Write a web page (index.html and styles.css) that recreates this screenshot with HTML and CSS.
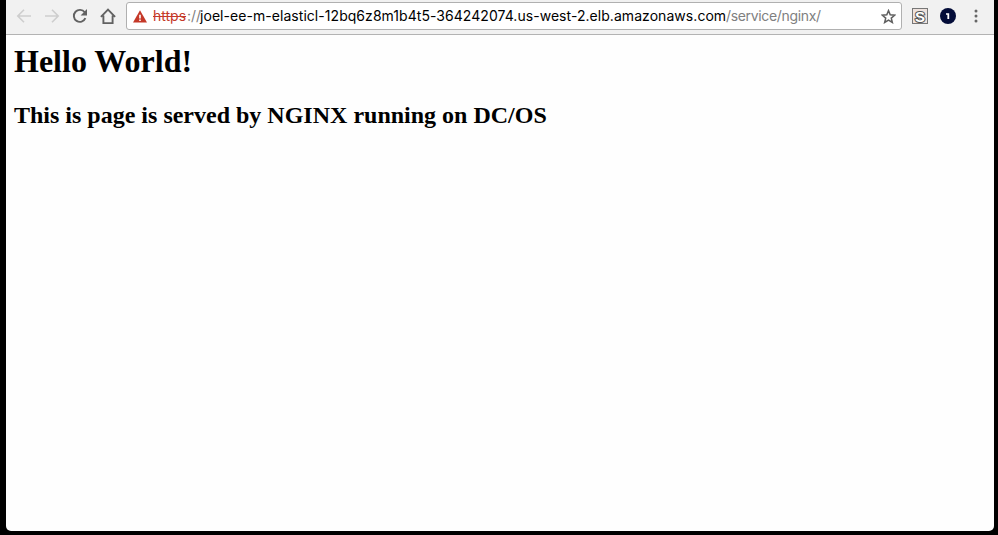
FILE: index.html
```html
<!DOCTYPE html>
<html lang="en">
<head>
<meta charset="utf-8">
<title>Hello World!</title>
<link rel="stylesheet" href="styles.css">
</head>
<body>
<div class="window">
  <header class="toolbar">
    <nav class="nav">
      <svg class="off" viewBox="0 0 16 16"><path d="M15 8H2M8 1.8 1.8 8 8 14.2"/></svg>
      <svg class="off" viewBox="0 0 16 16"><path d="M1 8h13M8 1.8 14.2 8 8 14.2"/></svg>
      <svg viewBox="0 0 16 16"><path class="thick" d="M13.4 10.2A6 6 0 1 1 12.7 4.3"/><path class="solid" d="M15 1v6.4H8.6z"/></svg>
      <svg viewBox="0 0 16 16"><path class="thick" d="M.9 8.8 8 1.7l7.1 7.1M3.4 7.4v7.7h9.2V7.4"/></svg>
    </nav>
    <div class="omnibox">
      <svg class="warning" viewBox="0 0 14 13"><path fill="#c53929" d="M7 .2 14 12.6H0z"/><path fill="#fff" d="M6.2 4.8h1.6v3.6H6.2zM6.2 9.5h1.6v1.6H6.2z"/></svg>
      <div class="url"><span class="scheme">https</span><span class="sep">://</span><span class="host">joel-ee-m-elasticl-12bq6z8m1b4t5-364242074.us-west-2.elb.amazonaws.com</span><span class="path">/service/nginx/</span></div>
      <svg class="star" viewBox="0 0 14 14"><path d="m7 1.5 1.6 3.9 4.2.4-3.2 2.7 1 4.1L7 10.4l-3.6 2.2 1-4.1-3.2-2.7 4.2-.4z"/></svg>
    </div>
    <div class="extensions">
      <span class="stylish">S</span>
      <svg class="badge" viewBox="0 0 16 16"><circle cx="8" cy="8" r="8" fill="#030c38"/><path fill="#fff" d="M6 5.2h3.2V11H7.4V6.8H6z"/></svg>
      <svg class="menu" viewBox="0 0 4 14"><circle cx="2" cy="2" r="1.5"/><circle cx="2" cy="7" r="1.5"/><circle cx="2" cy="12" r="1.5"/></svg>
    </div>
  </header>
  <main>
    <h1>Hello World!</h1>
    <h2>This is page is served by NGINX running on DC/OS</h2>
  </main>
</div>
</body>
</html>
```
FILE: styles.css
```css
* { box-sizing: border-box; }
body {
  margin: 0;
  height: 535px;
  padding: 0 4px 4px 6px;
  background: #000;
  overflow: hidden;
}
.window {
  height: 531px;
  background: #fefefe;
  border-radius: 0 0 5px 5px;
  overflow: hidden;
}
.toolbar {
  display: flex;
  align-items: flex-start;
  height: 35px;
  padding: 2px 12px 0 10px;
  background: #f1f1f1;
  border-bottom: 1px solid #b3b3b3;
}
.nav {
  display: flex;
  gap: 12px;
  padding-top: 6px;
  width: 110px;
}
.nav svg { width: 16px; height: 16px; flex: none; fill: none; stroke: #626262; }
.nav .off { stroke: #cecece; stroke-width: 1.6; }
.nav .thick { stroke-width: 1.9; }
.nav .solid { fill: #626262; stroke: none; }
.omnibox {
  display: flex;
  align-items: center;
  width: 776px;
  height: 28px;
  padding: 0 5px 0 6px;
  background: #fff;
  border: 1px solid #b0b0b0;
  border-radius: 3px;
}
.warning { width: 14px; height: 13px; }
.url {
  display: flex;
  flex: 1;
  margin-left: 6px;
  font: 14px/20px Inter, "Liberation Sans", sans-serif;
  white-space: nowrap;
  color: #000;
}
.scheme { width: 34px; color: #c53929; text-decoration: line-through; }
.sep { width: 13px; color: #808080; }
.host { width: 526px; letter-spacing: 0.05px; }
.path { color: #808080; letter-spacing: -0.33px; }
.star { width: 15px; height: 15px; fill: none; stroke: #5f5f5f; stroke-width: 1.4; }
.extensions {
  display: flex;
  align-items: center;
  height: 28px;
  margin-left: 10px;
}
.stylish {
  width: 16px;
  height: 16px;
  border: 1px solid #777;
  background: #eee2dd;
  color: #fff;
  font: bold 15px/15px "Liberation Sans", sans-serif;
  text-align: center;
  -webkit-text-stroke: 2px #555;
  paint-order: stroke fill;
}
.badge { width: 16px; height: 16px; margin-left: 12px; }
.menu { width: 4px; height: 14px; margin-left: 18px; fill: #666; }
main { padding: 8px; font-family: "Liberation Serif", serif; color: #000; }
h1 { margin: 0; font-size: 32px; line-height: 37px; }
h2 { margin: 22px 0 0; font-size: 24px; line-height: 27px; }
```
